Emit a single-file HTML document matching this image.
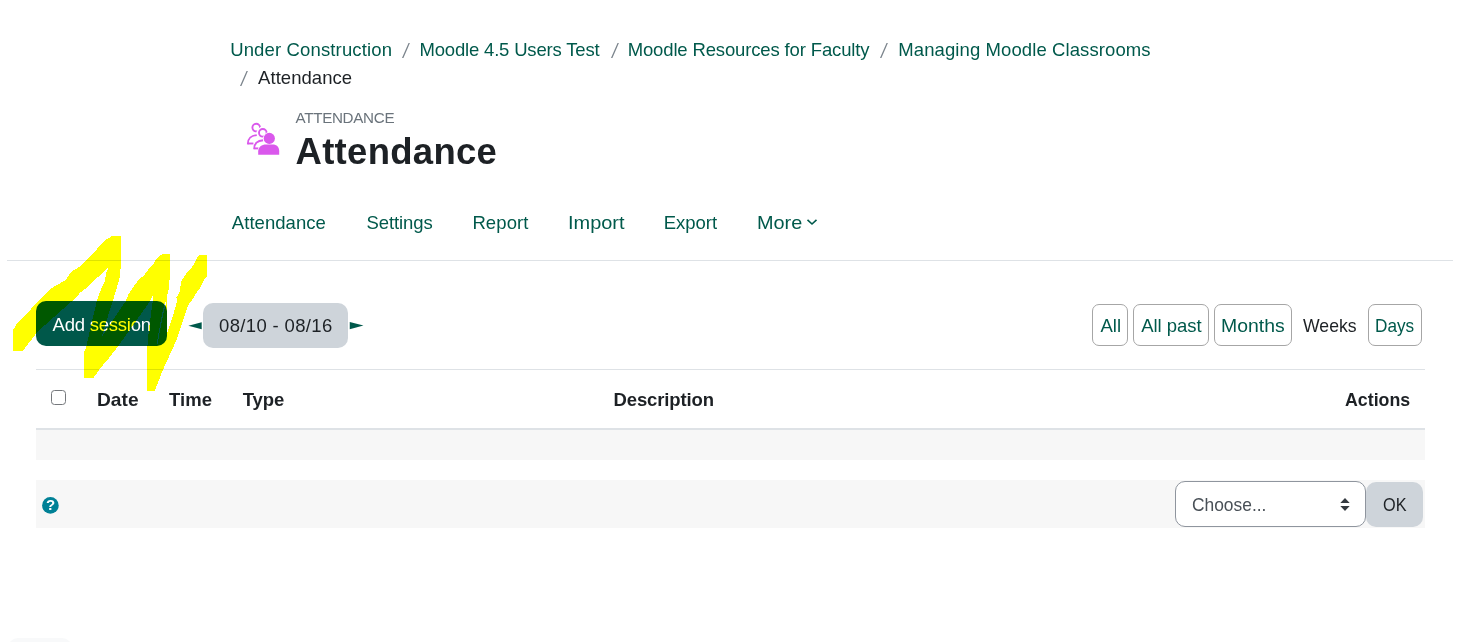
<!DOCTYPE html>
<html lang="en"><head><meta charset="utf-8"><title>Attendance</title>
<style>
html,body{margin:0;padding:0;background:#fff}
body{width:1468px;height:642px;position:relative;overflow:hidden;font-family:"Liberation Sans",sans-serif;color:#1d2125}
.t{position:absolute;white-space:nowrap;margin:0;padding:0;text-decoration:none;font-weight:400}
ol,ul{list-style:none;margin:0;padding:0}
.sl{font-family:"Liberation Serif",serif;font-size:22.4px;line-height:28px;color:#7a838b;transform:scaleX(1.27);transform-origin:0 0}
.abs{position:absolute;box-sizing:border-box}
.hr{left:7px;top:260px;width:1446px;height:1px;background:#dee2e6}
.btn-primary{left:36px;top:301px;width:131px;height:45px;border-radius:10px;background:#00584a;border:0}
.datebox{left:203px;top:303px;width:145px;height:45px;border-radius:10px;background:#ced4da}
.vbtn{top:304px;height:42px;border:1px solid #a6a6a6;border-radius:7px;background:#fff}
.tline{left:36px;width:1389px;background:#dee2e6}
.stripe{left:36px;width:1389px;background:#f7f7f7}
.cb{-webkit-appearance:none;appearance:none;margin:0;padding:0;left:51px;top:390px;width:15px;height:15px;border:1.6px solid #75787c;border-radius:3.5px;background:#fff}
.select{left:1175px;top:481px;width:191px;height:46px;border:1px solid #8f959e;border-radius:10px;background:#fff}
.okbtn{left:1366px;top:482px;width:57px;height:45px;border-radius:10px;background:#ced4da}
.scrib{position:absolute;left:0;top:0;mix-blend-mode:multiply;pointer-events:none}
.foot{left:8px;top:637.5px;width:64px;height:20px;border-radius:10px;background:#f8f9fa}
svg{display:block}
</style></head>
<body>
<nav aria-label="Navigation bar"><ol>
<li><a class="t" href="#" style="left:230.20px;top:36.00px;font-size:18.5px;line-height:28px;letter-spacing:0.142px;color:#00594b;">Under Construction</a></li><li><span class="t sl" style="left:401.6px;top:36.55px">/</span><a class="t" href="#" style="left:419.50px;top:36.00px;font-size:18.5px;line-height:28px;letter-spacing:-0.181px;color:#00594b;">Moodle 4.5 Users Test</a></li><li><span class="t sl" style="left:610.5px;top:36.55px">/</span><a class="t" href="#" style="left:627.70px;top:36.00px;font-size:18.5px;line-height:28px;letter-spacing:-0.144px;color:#00594b;">Moodle Resources for Faculty</a></li><li><span class="t sl" style="left:880.1px;top:36.55px">/</span><a class="t" href="#" style="left:898.30px;top:36.00px;font-size:18.5px;line-height:28px;letter-spacing:0.095px;color:#00594b;">Managing Moodle Classrooms</a></li><li><span class="t sl" style="left:240.1px;top:64.55px">/</span><span class="t" style="left:258.10px;top:64.00px;font-size:18.5px;line-height:28px;letter-spacing:0.043px;color:#1d2125;">Attendance</span></li>
</ol></nav>
<header>
<svg class="abs" style="left:244px;top:120px" width="40" height="40" viewBox="244 120 40 40">
<g fill="none" stroke="#da58ec" stroke-width="1.9">
<circle cx="256.2" cy="127.6" r="3.8"/>
<path d="M247.9 144.4 C247.6 138.6 251.5 135.4 256.8 135.1"/>
<path d="M247.9 143.5 L253.4 143.5"/>
</g>
<circle cx="262.8" cy="132.8" r="6.2" fill="#fff"/>
<g fill="none" stroke="#da58ec" stroke-width="1.9">
<circle cx="262.8" cy="132.8" r="3.8"/>
<path d="M254.2 149.3 C253.9 143.7 257.6 140.5 263.2 140.2"/>
<path d="M254.2 148.4 L258.6 148.4"/>
</g>
<g fill="#da58ec" stroke="#fff" stroke-width="1.4" paint-order="stroke">
<circle cx="269.3" cy="138.4" r="5.6"/>
<path d="M258.2 154.8 L258.2 151.5 C258.2 147 261.8 144.6 266 144.6 L272.6 144.6 C276.8 144.6 279.2 147 279.2 151.5 L279.2 154.8 Z"/>
</g>
</svg>
<div class="t" style="left:295.50px;top:106.00px;font-size:15.2px;line-height:23px;letter-spacing:-0.310px;color:#6a737b;">ATTENDANCE</div>
<h1 class="t" style="left:295.50px;top:124.00px;font-size:36.5px;line-height:55px;letter-spacing:0.294px;color:#1d2125;font-weight:700;">Attendance</h1>
</header>
<nav aria-label="Secondary"><ul>
<li><a class="t" href="#" style="left:231.80px;top:209.00px;font-size:18.5px;line-height:28px;letter-spacing:0.054px;color:#00594b;">Attendance</a></li><li><a class="t" href="#" style="left:366.50px;top:209.00px;font-size:18.5px;line-height:28px;letter-spacing:-0.099px;color:#00594b;">Settings</a></li><li><a class="t" href="#" style="left:472.40px;top:209.00px;font-size:18.5px;line-height:28px;letter-spacing:0.103px;color:#00594b;">Report</a></li><li><a class="t" href="#" style="left:567.72px;top:209.00px;font-size:18.5px;line-height:28px;letter-spacing:0.000px;color:#00594b;transform:scaleX(1.078);transform-origin:0 0;">Import</a></li><li><a class="t" href="#" style="left:663.70px;top:209.00px;font-size:18.5px;line-height:28px;letter-spacing:-0.006px;color:#00594b;">Export</a></li><li><a class="t" href="#" style="left:756.53px;top:209.00px;font-size:18.5px;line-height:28px;letter-spacing:0.000px;color:#00594b;transform:scaleX(1.074);transform-origin:0 0;">More</a>
<svg class="abs" style="left:806px;top:218px" width="12" height="8" viewBox="0 0 12 8"><path d="M1.5 1.8 L6 6 L10.5 1.8" fill="none" stroke="#00594b" stroke-width="1.6"/></svg></li>
</ul></nav>
<div class="abs hr"></div>
<main>
<div class="abs btn-primary"></div><a class="t" href="#" style="left:52.60px;top:311.00px;font-size:18.5px;line-height:28px;letter-spacing:-0.239px;color:#ffffff;">Add session</a>
<span class="t" style="left:183.96px;top:310.76px;font-size:22.3px;line-height:28px;color:#00594b;transform:scaleY(0.515);transform-origin:0 14.64px">◄</span>
<div class="abs datebox"></div><span class="t" style="left:219.10px;top:312.00px;font-size:18.5px;line-height:28px;letter-spacing:0.338px;color:#1d2125;">08/10 - 08/16</span>
<span class="t" style="left:345.24px;top:309.94px;font-size:22.95px;line-height:28px;color:#00594b;transform:scaleY(0.529);transform-origin:0 15.46px">►</span>
<div class="abs vbtn" style="left:1092px;width:36px"></div><a class="t" href="#" style="left:1100.40px;top:312.00px;font-size:18.5px;line-height:28px;letter-spacing:0.075px;color:#00594b;">All</a>
<div class="abs vbtn" style="left:1133px;width:76px"></div><a class="t" href="#" style="left:1141.30px;top:312.00px;font-size:18.5px;line-height:28px;letter-spacing:-0.061px;color:#00594b;">All past</a>
<div class="abs vbtn" style="left:1214px;width:78px"></div><a class="t" href="#" style="left:1220.65px;top:312.00px;font-size:18.5px;line-height:28px;letter-spacing:0.000px;color:#00594b;transform:scaleX(1.049);transform-origin:0 0;">Months</a>
<span class="t" style="left:1303.10px;top:312.00px;font-size:18.5px;line-height:28px;letter-spacing:0.000px;color:#1d2125;transform:scaleX(0.953);transform-origin:0 0;">Weeks</span>
<div class="abs vbtn" style="left:1368px;width:54px"></div><a class="t" href="#" style="left:1375.07px;top:312.00px;font-size:18.5px;line-height:28px;letter-spacing:0.000px;color:#00594b;transform:scaleX(0.929);transform-origin:0 0;">Days</a>
<div class="abs tline" style="top:369px;height:1px"></div>
<input type="checkbox" class="abs cb" aria-label="Select all sessions">
<span class="t" style="left:96.96px;top:386.00px;font-size:18.5px;line-height:28px;letter-spacing:0.000px;color:#1d2125;font-weight:700;transform:scaleX(1.036);transform-origin:0 0;">Date</span><span class="t" style="left:169.10px;top:386.00px;font-size:18.5px;line-height:28px;letter-spacing:0.048px;color:#1d2125;font-weight:700;">Time</span><span class="t" style="left:242.70px;top:386.00px;font-size:18.5px;line-height:28px;letter-spacing:-0.039px;color:#1d2125;font-weight:700;">Type</span><span class="t" style="left:613.50px;top:386.00px;font-size:18.5px;line-height:28px;letter-spacing:-0.117px;color:#1d2125;font-weight:700;">Description</span><span class="t" style="left:1344.50px;top:386.00px;font-size:18.5px;line-height:28px;letter-spacing:0.000px;color:#1d2125;font-weight:700;transform:scaleX(0.961);transform-origin:0 0;">Actions</span>
<div class="abs tline" style="top:428px;height:2px"></div>
<div class="abs stripe" style="top:430px;height:30px"></div>
<div class="abs stripe" style="top:480px;height:48px"></div>
<svg class="abs" style="left:42px;top:496.7px" width="17" height="17" viewBox="0 0 17 17"><circle cx="8.4" cy="8.4" r="8.3" fill="#008196"/></svg>
<span class="t" style="left:45.9px;top:496px;font-size:15px;line-height:18px;font-weight:700;color:#fff">?</span>
<div class="abs select"></div><span class="t" style="left:1191.80px;top:491.00px;font-size:18.5px;line-height:28px;letter-spacing:0.000px;color:#495057;transform:scaleX(0.939);transform-origin:0 0;">Choose...</span>
<svg class="abs" style="left:1339px;top:497px" width="12" height="15" viewBox="0 0 12 15"><path d="M1.3 6.1 L6 1 L10.7 6.1 Z M1.3 8.9 L6 14 L10.7 8.9 Z" fill="#343a40"/></svg>
<div class="abs okbtn"></div><span class="t" style="left:1382.90px;top:491.00px;font-size:18.5px;line-height:28px;letter-spacing:0.000px;color:#1d2125;transform:scaleX(0.880);transform-origin:0 0;">OK</span>
</main>
<div class="abs foot"></div>
<svg class="scrib" width="1468" height="642" viewBox="0 0 1468 642"><path d="M13.1,350.6 L13.1,330.2 L16.4,324.4 L26.2,314.6 L37.6,301.5 L44.2,295 L49.1,290 L56.7,285.1 L65.4,280.2 L70.9,272 L80.7,266 L85.1,261.6 L92.7,253.4 L96,250.2 L104.1,240.9 L112.3,236 L121,236 L121,262.7 L120,275.8 L118.3,282.3 L115.6,292.2 L113.1,299.8 L101.5,337 L125.8,301.1 L128.4,294.3 L132.7,287.8 L138.2,280.2 L144.7,274.7 L149.1,268.2 L153.4,263.8 L156.2,258.9 L162.2,254 L169.8,254 L169.8,276.9 L168.7,288.9 L167.1,295.4 L167.3,306 L166.8,334 L169.7,325.8 L173.5,313.7 L177.2,301.1 L176.3,297.6 L180.2,291.1 L180.7,282.3 L184,276.9 L187.2,272.5 L193.8,264.9 L196,259.4 L199.2,255.1 L206.9,255.1 L206.9,276.9 L204.7,279.1 L202,283.4 L199.8,288.9 L196,293.2 L193.5,298 L188.3,304.8 L181.8,324.4 L176.9,339.2 L168.7,357.1 L162.1,371.9 L154.8,390.7 L147.4,390.7 L147.4,345.7 L149.1,327.7 L152.3,304.8 L153.4,294.3 L150.1,301.1 L118.3,346 L109,358 L100,368.5 L93.2,378.4 L84.2,378.4 L84.2,352.2 L86.5,346 L88.3,337.5 L93.2,316.3 L96.8,301.1 L99.2,294.3 L102,286.7 L104.7,281.3 L106.3,272.5 L109,267.1 L98.1,276.9 L89.4,285.6 L80.7,292.2 L74.2,299.2 L54,317 L40,329.5 L35.5,334.5 L22.9,350.6Z M166.2,302 L164.9,302 L162.2,313 L156.7,343.5 L157.6,343.5 L163.4,313Z" fill="#ffff00" fill-rule="evenodd" shape-rendering="crispEdges"/></svg>
</body></html>
